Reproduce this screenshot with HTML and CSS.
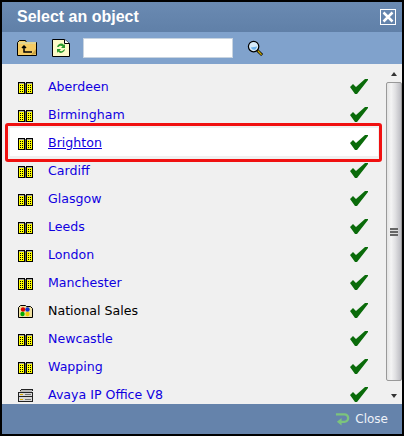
FILE: index.html
```html
<!DOCTYPE html>
<html lang="en">
<head>
    <meta charset="UTF-8">
    <title>Select an object</title>
    <link rel="stylesheet" href="styles.css">
</head>
<body>
    <svg class="defs" width="0" height="0">
        <symbol id="site" viewBox="0 0 15 12" shape-rendering="crispEdges">
            <path d="M0 0h7v12H0zM8 0h7v12H8z" fill="#000"/>
            <path d="M1 1h5v1H1zM9 1h5v1H9z" fill="#a8a8a0"/>
            <path d="M1 2h5v9H1zM9 2h5v9H9z" fill="#ff0"/>
            <path d="M2 3h1v1H2zM4 3h1v1H4zM10 3h1v1h-1zM12 3h1v1h-1zM2 5h1v1H2zM4 5h1v1H4zM10 5h1v1h-1zM12 5h1v1h-1zM2 7h1v1H2zM4 7h1v1H4zM10 7h1v1h-1zM12 7h1v1h-1zM2 9h1v1H2zM4 9h1v1H4zM10 9h1v1h-1zM12 9h1v1h-1z" fill="#000"/>
            <path d="M7 1h1v11H7z" fill="#666"/>
        </symbol>
        <symbol id="group" viewBox="0 0 15 13">
            <path d="M.5 2.500l2-2h5l1 1h4l2 2v9H.5z" fill="#efe0a0" stroke="#000"/>
            <circle cx="5" cy="4.500" r="2.200" fill="#d00"/>
            <circle cx="9.500" cy="4.500" r="2.200" fill="#13c"/>
            <circle cx="4.500" cy="9" r="2.200" fill="#0a0"/>
            <circle cx="9.500" cy="9" r="2.200" fill="#ec0"/>
        </symbol>
        <symbol id="server" viewBox="0 0 15 13" shape-rendering="crispEdges">
            <path d="M3 0h12v1h-12zM2 1h13v1H2zM0 3h15v10H0z" fill="#222"/>
            <path d="M3 1h11v2H2z" fill="#bbb"/>
            <path d="M1 4h13v3H1zM1 8h13v4H1z" fill="#d8d8d8"/>
            <path d="M2 5h3v1H2zM2 10h3v1H2z" fill="#e0b000"/>
            <path d="M7 5h6v1H7zM7 10h6v1H7z" fill="#777"/>
        </symbol>
        <symbol id="tick" viewBox="0 0 18 15">
            <path d="M0 8l3-3 3 3 9-8h3v1L7 15H5z" fill="#0a6b0a"/>
        </symbol>
    </svg>

    <div class="dialog">
        <div class="title-bar">
            <span class="title">Select an object</span>
            <span class="close-box">
                <svg width="14" height="14" viewBox="0 0 14 14"><path d="M2.500 2.500l9 9M11.500 2.500l-9 9" stroke="#fff" stroke-width="2.500"/></svg>
            </span>
        </div>

        <div class="toolbar">
            <svg class="tool folder" width="20" height="20" viewBox="0 0 20 20">
                <path d="M.5 17.500v-13l2-2h6l1 2h10v13z" fill="#f5cb62" stroke="#000"/>
                <path d="M1 4h18v2H1z" fill="#e2d48f"/>
                <path d="M14 17l5-1v-5z" fill="#c9a23f"/>
                <path d="M7 8v6h8M5 10l2-2 2 2" fill="none" stroke="#000" stroke-width="1.500"/>
            </svg>
            <svg class="tool page" width="18" height="20" viewBox="0 0 18 20">
                <path d="M.5 1.500h12l5 4v13H.5z" fill="#fdfbc8" stroke="#000"/>
                <path d="M12.500 1.500v4h5" fill="#fff" stroke="#000"/>
                <path d="M5 9a4 4 0 0 1 7-2l1-1v4H9l1.500-1.500a2.500 2.500 0 0 0-4 .5z" fill="#2a9a2a"/>
                <path d="M13 11a4 4 0 0 1-7 2.500L5 15v-4h4l-1.500 1.500a2.500 2.500 0 0 0 4-.5z" fill="#2a9a2a"/>
            </svg>
            <input class="search" type="text">
            <svg class="magnifier" width="17" height="17" viewBox="0 0 18 18">
                <circle cx="7" cy="7" r="5.500" fill="#d8ecfb" stroke="#000" stroke-width="1.300"/>
                <path d="M4 8a4 4 0 0 0 5 2l2-3z" fill="#6fb4ee"/>
                <path d="M11 11l5 5" stroke="#000" stroke-width="3"/>
                <path d="M11.500 11.500l4 4" stroke="#c9a800" stroke-width="1.500"/>
            </svg>
        </div>

        <div class="body">
            <ul class="list">
                <li class="row"><svg class="icon"><use href="#site"/></svg><a class="name">Aberdeen</a><svg class="tick"><use href="#tick"/></svg></li>
                <li class="row"><svg class="icon"><use href="#site"/></svg><a class="name">Birmingham</a><svg class="tick"><use href="#tick"/></svg></li>
                <li class="row selected"><svg class="icon"><use href="#site"/></svg><a class="name">Brighton</a><svg class="tick"><use href="#tick"/></svg></li>
                <li class="row"><svg class="icon"><use href="#site"/></svg><a class="name">Cardiff</a><svg class="tick"><use href="#tick"/></svg></li>
                <li class="row"><svg class="icon"><use href="#site"/></svg><a class="name">Glasgow</a><svg class="tick"><use href="#tick"/></svg></li>
                <li class="row"><svg class="icon"><use href="#site"/></svg><a class="name">Leeds</a><svg class="tick"><use href="#tick"/></svg></li>
                <li class="row"><svg class="icon"><use href="#site"/></svg><a class="name">London</a><svg class="tick"><use href="#tick"/></svg></li>
                <li class="row"><svg class="icon"><use href="#site"/></svg><a class="name">Manchester</a><svg class="tick"><use href="#tick"/></svg></li>
                <li class="row"><svg class="icon"><use href="#group"/></svg><a class="name plain">National Sales</a><svg class="tick"><use href="#tick"/></svg></li>
                <li class="row"><svg class="icon"><use href="#site"/></svg><a class="name">Newcastle</a><svg class="tick"><use href="#tick"/></svg></li>
                <li class="row"><svg class="icon"><use href="#site"/></svg><a class="name">Wapping</a><svg class="tick"><use href="#tick"/></svg></li>
                <li class="row"><svg class="icon"><use href="#server"/></svg><a class="name">Avaya IP Office V8</a><svg class="tick"><use href="#tick"/></svg></li>
            </ul>

            <div class="scrollbar">
                <span class="arrow up"></span>
                <div class="thumb">
                    <span class="grip"></span>
                </div>
                <span class="arrow down"></span>
            </div>
        </div>

        <div class="footer">
            <svg width="15" height="14" viewBox="0 0 16 14">
                <path d="M1 2h9a3.500 3.500 0 0 1 0 8H6" fill="none" stroke="#7cc47c" stroke-width="2.500"/>
                <path d="M7 6v8l-5-4z" fill="#7cc47c"/>
            </svg>
            <span class="close-label">Close</span>
        </div>
    </div>
</body>
</html>
```

FILE: styles.css
```css
html, body {
    margin: 0;
    padding: 0;
}

body {
    width: 404px;
    height: 436px;
    overflow: hidden;
    font-family: "DejaVu Sans", Verdana, sans-serif;
}

.defs {
    display: block;
    height: 0;
}

.dialog {
    width: 404px;
    height: 436px;
    box-sizing: border-box;
    border: 2px solid #000;
    display: flex;
    flex-direction: column;
    background-color: #f0f0f0;
}

.title-bar {
    height: 30px;
    flex: none;
    display: flex;
    align-items: center;
    justify-content: space-between;
    padding: 0 6px 0 15px;
    background: linear-gradient(#6a8ab2, #6080a8);
}

.title {
    font-family: "Liberation Sans", Arial, sans-serif;
    font-weight: bold;
    font-size: 16px;
    color: #fff;
}

.close-box {
    width: 14px;
    height: 14px;
    flex: none;
    border: 1px solid #fff;
    display: flex;
}

.toolbar {
    height: 32px;
    flex: none;
    display: flex;
    align-items: center;
    padding-left: 15px;
    background-color: #80a2cc;
}

.tool.folder {
    margin-right: 15px;
}

.tool.page {
    margin-right: 13px;
}

.search {
    width: 150px;
    height: 20px;
    box-sizing: border-box;
    margin-right: 14px;
    border: 1px solid #c8d4e0;
    background-color: #fff;
    padding: 0;
}

.body {
    flex: 1;
    display: flex;
    min-height: 0;
}

.list {
    flex: 1;
    margin: 0;
    padding: 8px 0 0;
    list-style: none;
}

.row {
    height: 28px;
    display: flex;
    align-items: center;
    padding-left: 16px;
    padding-right: 18px;
    font-size: 12.6px;
    position: relative;
}

.row.selected {
    margin: 0 8px;
    padding-left: 8px;
    padding-right: 10px;
    background-color: #fff;
}

/* red marker drawn around the chosen row */
.row.selected::after {
    content: "";
    position: absolute;
    left: -5px;
    right: -4px;
    top: -5px;
    bottom: -6px;
    border: 3px solid #f01010;
    border-radius: 3px;
}

.row.selected .name {
    text-decoration: underline;
}

.icon {
    width: 15px;
    height: 13px;
    margin-top: 2px;
    margin-right: 15px;
    flex: none;
}

.name {
    flex: 1;
    color: #1000e0;
}

.name.plain {
    color: #000;
}

.tick {
    width: 18px;
    height: 15px;
    flex: none;
}

.scrollbar {
    width: 16px;
    flex: none;
    display: flex;
    flex-direction: column;
    background-color: #f0f0f0;
}

.arrow {
    flex: none;
    width: 16px;
    position: relative;
}

.arrow.up {
    height: 18px;
}

.arrow.down {
    height: 23px;
}

.arrow::before {
    content: "";
    position: absolute;
    left: 5px;
    border-left: 3px solid transparent;
    border-right: 3px solid transparent;
}

.arrow.up::before {
    top: 8px;
    border-bottom: 4px solid #333;
}

.arrow.down::before {
    top: 13px;
    border-top: 4px solid #333;
}

.thumb {
    flex: 1;
    box-sizing: border-box;
    width: 16px;
    display: flex;
    align-items: center;
    justify-content: center;
    border: 1px solid #999;
    border-radius: 2px;
    background: linear-gradient(to right, #e4e4e4, #f4f4f4 30%, #e0e0e2 60%, #bcbcc2);
}

.grip {
    width: 8px;
    height: 8px;
    background: repeating-linear-gradient(#666 0 2px, #ddd 2px 3px);
}

.footer {
    height: 30px;
    flex: none;
    display: flex;
    align-items: center;
    justify-content: flex-end;
    gap: 5px;
    padding-right: 14px;
    background-color: #6583ab;
}

.close-label {
    font-size: 12px;
    color: #eef2f8;
}
```
